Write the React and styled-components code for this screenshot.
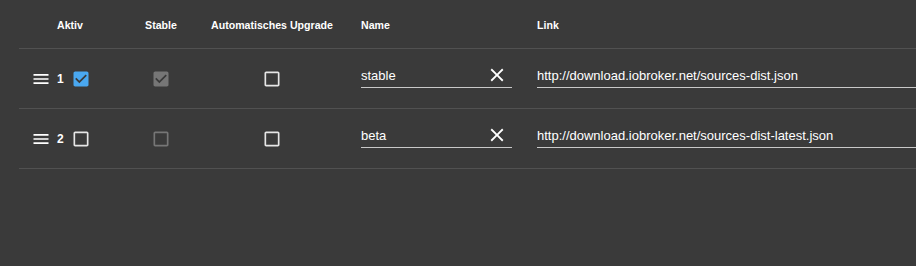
import React from 'react'
import styled, { createGlobalStyle } from 'styled-components'

const COLORS = {
  bg: '#3a3a3a',
  divider: '#515151',
  text: '#ffffff',
  primary: '#4aa8f0',
  disabled: '#767676',
  outline: '#e6e6e6',
  underline: '#c8c8c8',
}

const GlobalStyle = createGlobalStyle`
  html, body {
    margin: 0;
    padding: 0;
    background: ${COLORS.bg};
    font-family: "Liberation Sans", Arial, sans-serif;
    color: ${COLORS.text};
  }
  body {
    min-height: 266px;
  }
`

const sources = [
  { id: 1, active: true, stable: true, auto: false, name: 'stable', link: 'http://download.iobroker.net/sources-dist.json' },
  { id: 2, active: false, stable: false, auto: false, name: 'beta', link: 'http://download.iobroker.net/sources-dist-latest.json' },
]

function MenuIcon() {
  return (
    <Svg viewBox="0 0 24 24" width="20" height="20">
      <path fill="currentColor" d="M3 18h18v-2H3v2zm0-5h18v-2H3v2zm0-7v2h18V6H3z" />
    </Svg>
  )
}

function CloseIcon() {
  return (
    <Svg viewBox="0 0 24 24" width="22" height="22">
      <path
        fill="currentColor"
        d="M19 6.41L17.59 5 12 10.59 6.41 5 5 6.41 10.59 12 5 17.59 6.41 19 12 13.41 17.59 19 19 17.59 13.41 12z"
      />
    </Svg>
  )
}

function CheckIcon({ checked, color }) {
  return (
    <Svg viewBox="0 0 24 24" width="20" height="20" style={{ color }}>
      {checked ? (
        <path
          fill="currentColor"
          d="M19 3H5c-1.11 0-2 .9-2 2v14c0 1.1.89 2 2 2h14c1.11 0 2-.9 2-2V5c0-1.1-.89-2-2-2zm-9 14l-5-5 1.41-1.41L10 14.17l7.59-7.59L19 8l-9 9z"
        />
      ) : (
        <path
          fill="currentColor"
          d="M19 5v14H5V5h14m0-2H5c-1.1 0-2 .9-2 2v14c0 1.1.9 2 2 2h14c1.1 0 2-.9 2-2V5c0-1.1-.9-2-2-2z"
        />
      )}
    </Svg>
  )
}

export default function App() {
  return (
    <>
      <GlobalStyle />
      <Table>
        <HeaderRow>
          <HeadCell $center>Aktiv</HeadCell>
          <HeadCell $center>Stable</HeadCell>
          <HeadCell $center>Automatisches Upgrade</HeadCell>
          <HeadCell>Name</HeadCell>
          <HeadCell>Link</HeadCell>
        </HeaderRow>
        {sources.map((s) => (
          <Row key={s.id}>
            <FirstCell>
              <DragHandle>
                <MenuIcon />
              </DragHandle>
              <Index>{s.id}</Index>
              <CheckIcon checked={s.active} color={s.active ? COLORS.primary : COLORS.outline} />
            </FirstCell>
            <Cell $center>
              <CheckIcon checked={s.stable} color={COLORS.disabled} />
            </Cell>
            <Cell $center>
              <CheckIcon checked={s.auto} color={COLORS.outline} />
            </Cell>
            <Cell>
              <Field $width="151px">
                <FieldText>{s.name}</FieldText>
                <ClearButton>
                  <CloseIcon />
                </ClearButton>
              </Field>
            </Cell>
            <Cell>
              <Field>
                <FieldText>{s.link}</FieldText>
              </Field>
            </Cell>
          </Row>
        ))}
      </Table>
    </>
  )
}

const Svg = styled.svg`
  display: block;
  flex-shrink: 0;
`

const Table = styled.div`
  margin-left: 19px;
`

const gridColumns = '102px 80px 142px 176px 1fr'

const HeaderRow = styled.div`
  display: grid;
  grid-template-columns: ${gridColumns};
  height: 48px;
  border-bottom: 1px solid ${COLORS.divider};
`

const HeadCell = styled.div`
  display: flex;
  align-items: center;
  justify-content: ${(p) => (p.$center ? 'center' : 'flex-start')};
  padding-left: ${(p) => (p.$center ? '0' : '18px')};
  padding-top: 2px;
  font-size: 10.6px;
  font-weight: bold;
  white-space: nowrap;
`

const Row = styled.div`
  display: grid;
  grid-template-columns: ${gridColumns};
  height: 59px;
  border-bottom: 1px solid ${COLORS.divider};
`

const Cell = styled.div`
  display: flex;
  align-items: center;
  justify-content: ${(p) => (p.$center ? 'center' : 'flex-start')};
  padding-left: ${(p) => (p.$center ? '0' : '18px')};
  min-width: 0;
`

const FirstCell = styled.div`
  display: flex;
  align-items: center;
  padding-left: 12px;
`

const DragHandle = styled.span`
  color: #ffffff;
  cursor: grab;
  display: flex;
`

const Index = styled.span`
  font-size: 12px;
  font-weight: bold;
  margin: 0 7px 0 6px;
`

const Field = styled.div`
  display: flex;
  align-items: center;
  width: ${(p) => p.$width || '100%'};
  height: 22px;
  margin-bottom: 5px;
  border-bottom: 1px solid ${COLORS.underline};
`

const FieldText = styled.span`
  flex: 1;
  font-size: 13px;
  white-space: nowrap;
  overflow: hidden;
`

const ClearButton = styled.span`
  display: flex;
  color: #ffffff;
  margin-right: 4px;
  margin-bottom: 2px;
`
